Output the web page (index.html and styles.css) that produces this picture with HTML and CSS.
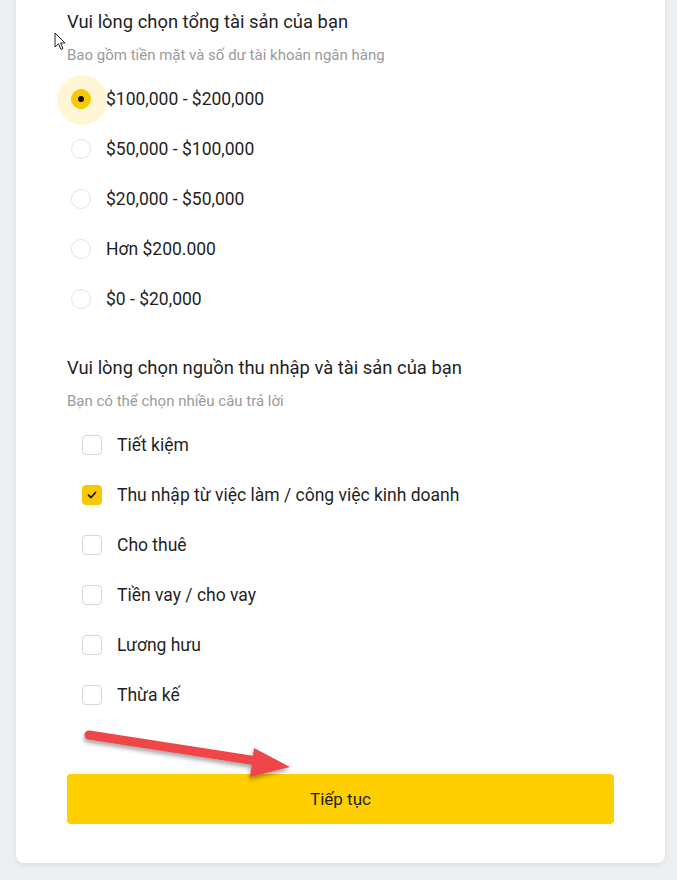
FILE: index.html
```html
<html>
<head>
    <meta charset="utf-8">
    <link rel="stylesheet" href="styles.css">
</head>
<body>
    <div class="card">
        <section class="question">
            <h3 class="questionTitle">Vui lòng chọn tổng tài sản của bạn</h3>
            <p class="questionHint">Bao gồm tiền mặt và số dư tài khoản ngân hàng</p>
            <ul class="options radios">
                <li class="option checked"><span class="radio"></span>$100,000 - $200,000</li>
                <li class="option"><span class="radio"></span>$50,000 - $100,000</li>
                <li class="option"><span class="radio"></span>$20,000 - $50,000</li>
                <li class="option"><span class="radio"></span>Hơn $200.000</li>
                <li class="option"><span class="radio"></span>$0 - $20,000</li>
            </ul>
        </section>

        <section class="question">
            <h3 class="questionTitle">Vui lòng chọn nguồn thu nhập và tài sản của bạn</h3>
            <p class="questionHint">Bạn có thể chọn nhiều câu trả lời</p>
            <ul class="options checks">
                <li class="option"><span class="box"></span>Tiết kiệm</li>
                <li class="option checked">
                    <span class="box">
                        <svg width="10" height="8" viewBox="0 0 10 8"><path d="M1.5 4.2 L4 6.5 L8.5 1.5" fill="none" stroke="#1a1a1a" stroke-width="1.8" stroke-linecap="round" stroke-linejoin="round"/></svg>
                    </span>Thu nhập từ việc làm / công việc kinh doanh</li>
                <li class="option"><span class="box"></span>Cho thuê</li>
                <li class="option"><span class="box"></span>Tiền vay / cho vay</li>
                <li class="option"><span class="box"></span>Lương hưu</li>
                <li class="option"><span class="box"></span>Thừa kế</li>
            </ul>
        </section>

        <button class="next">Tiếp tục</button>
    </div>

    <!-- annotation arrow drawn over the screenshot -->
    <svg class="annotation" width="240" height="70" viewBox="0 0 240 70">
        <defs>
            <filter id="shadow" x="-10%" y="-30%" width="130%" height="180%">
                <feDropShadow dx="-1" dy="3" stdDeviation="2" flood-color="#000" flood-opacity="0.35"/>
            </filter>
        </defs>
        <g filter="url(#shadow)" fill="#ef4649">
            <path d="M7 10 L175 36" stroke="#ef4649" stroke-width="9" stroke-linecap="round"/>
            <polygon points="172,23 208,42 168,52"/>
        </g>
    </svg>

    <svg class="cursor" width="14" height="20" viewBox="0 0 14 20">
        <path d="M1 1 L1 15 L4.5 11.8 L7 17.5 L9 16.6 L6.6 11 L11 11 Z" fill="#fff" stroke="#222" stroke-width="1" stroke-linejoin="round"/>
    </svg>
</body>
</html>
```

FILE: styles.css
```css
body {
    margin: 0px;
    background-color: #eeeff1;
    font-family: Roboto, "Liberation Sans", Arial, sans-serif;
    color: #222222;
    overflow: hidden;
}
ul {
    list-style: none;
    padding: 0px;
    margin: 0px;
}
.card {
    background-color: #ffffff;
    margin: -30px 12px 0px 16px;
    padding: 40px 51px 39px 51px;
    border-radius: 8px;
    box-shadow: 0px 2px 6px rgba(0, 0, 0, 0.08);
}
.question {
    margin-bottom: 32px;
}
.questionTitle {
    font-size: 18.4px;
    font-weight: normal;
    line-height: 24px;
    margin: 0px 0px 11px 0px;
    color: #1f1f1f;
}
.questionHint {
    font-size: 15px;
    line-height: 20px;
    margin: 0px 0px 9px 0px;
    color: #9a9a9a;
}
.option {
    display: flex;
    align-items: center;
    height: 50px;
    font-size: 17.5px;
    color: #1f1f1f;
}
.radios {
    position: relative;
    z-index: 0;
}
.radios .option {
    padding-left: 4px;
}
.radio {
    position: relative;
    width: 18px;
    height: 18px;
    border: 1px solid #e4e4e4;
    border-radius: 50%;
    margin-right: 15px;
}
.radios .checked .radio {
    background-color: #f8c800;
    border-color: #f8c800;
}
.radios .checked .radio::before {
    content: "";
    position: absolute;
    left: -15px;
    top: -15px;
    width: 50px;
    height: 50px;
    border-radius: 50%;
    background-color: #fff6d6;
    z-index: -1;
}
.radios .checked .radio::after {
    content: "";
    position: absolute;
    left: 6px;
    top: 6px;
    width: 6px;
    height: 6px;
    border-radius: 50%;
    background-color: #111111;
}
.checks .option {
    padding-left: 15px;
}
.box {
    display: flex;
    align-items: center;
    justify-content: center;
    width: 18px;
    height: 18px;
    border: 1px solid #d6d6d6;
    border-radius: 4px;
    margin-right: 15px;
}
.checks .checked .box {
    background-color: #f8c800;
    border-color: #f8c800;
}
.next {
    display: block;
    width: 100%;
    height: 50px;
    margin-top: 54px;
    border: none;
    border-radius: 4px;
    background-color: #ffcf00;
    color: #222222;
    font-family: Roboto, "Liberation Sans", Arial, sans-serif;
    font-size: 17px;
}
.annotation {
    position: absolute;
    left: 82px;
    top: 725px;
}
.cursor {
    position: absolute;
    left: 54px;
    top: 32px;
}
```
